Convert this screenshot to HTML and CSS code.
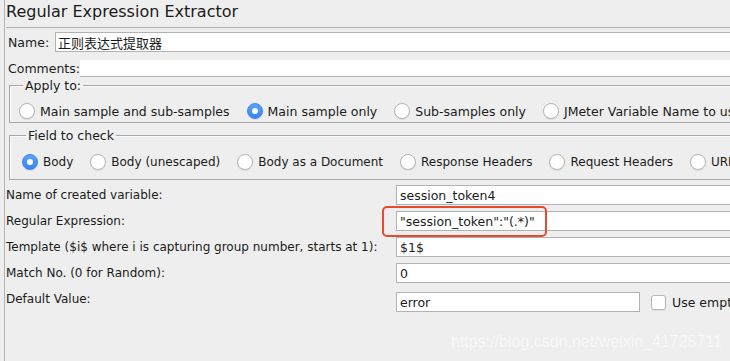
FILE: index.html
```html
<!DOCTYPE html>
<html lang="en">
<head>
    <meta charset="UTF-8">
    <meta name="viewport" content="width=device-width, initial-scale=1.0">
    <title>Regular Expression Extractor</title>
    <link rel="stylesheet" href="styles.css">
</head>
<body>
<div class="editor">
    <h1 class="title">Regular Expression Extractor</h1>

    <div class="name-row">
        <label>Name:</label>
        <input type="text" class="field" value="正则表达式提取器">
    </div>
    <div class="comments-row">
        <label>Comments:</label>
        <input type="text" class="field flat" value="">
    </div>

    <fieldset class="group apply">
        <legend>Apply to:</legend>
        <div class="options">
            <span class="option"><i class="radio"></i>Main sample and sub-samples</span>
            <span class="option"><i class="radio on"></i>Main sample only</span>
            <span class="option"><i class="radio"></i>Sub-samples only</span>
            <span class="option"><i class="radio"></i>JMeter Variable Name to use</span>
        </div>
    </fieldset>

    <fieldset class="group check">
        <legend>Field to check</legend>
        <div class="options">
            <span class="option"><i class="radio on"></i>Body</span>
            <span class="option"><i class="radio"></i>Body (unescaped)</span>
            <span class="option"><i class="radio"></i>Body as a Document</span>
            <span class="option"><i class="radio"></i>Response Headers</span>
            <span class="option"><i class="radio"></i>Request Headers</span>
            <span class="option"><i class="radio"></i>URL</span>
        </div>
    </fieldset>

    <div class="form">
        <label>Name of created variable:</label>
        <div class="cell"><input type="text" class="field" value="session_token4"></div>

        <label>Regular Expression:</label>
        <div class="cell marked">
            <input type="text" class="field" value="&quot;session_token&quot;:&quot;(.*)&quot;">
            <span class="mark"></span>
        </div>

        <label>Template ($i$ where i is capturing group number, starts at 1):</label>
        <div class="cell"><input type="text" class="field" value="$1$"></div>

        <label>Match No. (0 for Random):</label>
        <div class="cell"><input type="text" class="field" value="0"></div>

        <label>Default Value:</label>
        <div class="cell default">
            <input type="text" class="field short" value="error">
            <span class="checkbox"></span>
            <span>Use empty default value</span>
        </div>
    </div>
</div>

<div class="watermark">https://blog.csdn.net/weixin_41725711</div>
</body>
</html>
```

FILE: styles.css
```css
html, body {
    margin: 0;
    height: 100%;
}

body {
    background: #eeeeee;
    color: #1b1b1b;
    font-family: "DejaVu Sans", sans-serif;
    font-size: 12px;
    overflow: hidden;
    position: relative;
}

.editor {
    margin-left: 4px;
    padding-left: 1px;
    border-left: 1px solid #b4b4b4;
    width: 830px;
    height: 100%;
    box-sizing: border-box;
}

.title {
    margin: 0;
    height: 27px;
    font-size: 16px;
    font-weight: normal;
    line-height: 24px;
    border-bottom: 1px solid #b0b0b0;
}

.field {
    box-sizing: border-box;
    height: 20px;
    margin: 0;
    padding: 0 3px;
    border: 1px solid #b2b2b2;
    background: #fff;
    font-family: "DejaVu Sans", "Noto Sans CJK SC", sans-serif;
    font-size: 12.5px;
    color: #1b1b1b;
    outline: none;
}

.name-row {
    display: flex;
    align-items: center;
    margin-top: 4px;
    padding-left: 2px;
    height: 20px;
}

.name-row label {
    width: 47px;
    font-size: 12.5px;
}

.name-row .field {
    flex: 1;
    padding-left: 2px;
    font-size: 13px;
}

.comments-row {
    display: flex;
    align-items: flex-end;
    padding-left: 2px;
    height: 25px;
}

.comments-row label {
    width: 72px;
    font-size: 12.5px;
    line-height: 17px;
}

.comments-row .field.flat {
    flex: 1;
    height: 17px;
    border: 0;
    border-bottom: 1px solid #b2b2b2;
}

.group {
    margin: 0 0 0 3px;
    padding: 0;
    border: 1px solid #a8a8a8;
    box-shadow: 1px 1px 0 #fafafa inset;
    font-size: 12.5px;
}

.group legend {
    margin-left: 4px;
    padding: 0 2px;
    line-height: 15px;
}

.apply {
    margin-top: 1px;
    padding: 10px 0 3px 9px;
}

.check {
    margin-top: 5px;
    padding: 11px 0 9px 12px;
}

.check .options {
    font-size: 12px;
}

.options {
    display: flex;
    align-items: center;
    gap: 17px;
    height: 16px;
    white-space: nowrap;
}

.option {
    display: flex;
    align-items: center;
}

.radio {
    box-sizing: border-box;
    width: 16px;
    height: 16px;
    margin-right: 5px;
    border-radius: 50%;
    border: 1px solid #b5b5b5;
    background: #fff;
    box-shadow: 0 1px 1px rgba(0, 0, 0, 0.08);
    display: flex;
    align-items: center;
    justify-content: center;
}

.radio.on {
    border-color: #3b83ee;
    background: linear-gradient(#5aa2fb, #3a85f3);
}

.radio.on::after {
    content: "";
    width: 6px;
    height: 6px;
    border-radius: 50%;
    background: #fff;
}

.form {
    display: grid;
    grid-template-columns: 390px 1fr;
    grid-auto-rows: 26px;
    margin-top: 3px;
}

.form label {
    padding-top: 3px;
    line-height: 18px;
    white-space: nowrap;
}

.cell {
    display: flex;
    align-items: center;
    height: 20px;
    margin-top: 2px;
}

.cell .field {
    flex: 1;
}

.marked {
    position: relative;
}

.mark {
    position: absolute;
    left: -14px;
    top: -5px;
    width: 165px;
    height: 31px;
    box-sizing: border-box;
    border: 2px solid #ea4a2c;
    border-radius: 5px;
}

.default {
    margin-top: 5px;
    font-size: 12.5px;
    white-space: nowrap;
}

.default .field.short {
    flex: none;
    width: 244px;
}

.checkbox {
    box-sizing: border-box;
    width: 15px;
    height: 15px;
    margin: 0 6px 0 11px;
    border: 1px solid #b5b5b5;
    border-radius: 3px;
    background: #fff;
    box-shadow: 0 1px 1px rgba(0, 0, 0, 0.08);
}

.watermark {
    position: absolute;
    left: 451px;
    top: 333px;
    font-family: "Liberation Sans", Arial, sans-serif;
    font-size: 16px;
    color: #f9f9f9;
    text-shadow: 0 0 1px rgba(0, 0, 0, 0.03);
    white-space: nowrap;
}
```
